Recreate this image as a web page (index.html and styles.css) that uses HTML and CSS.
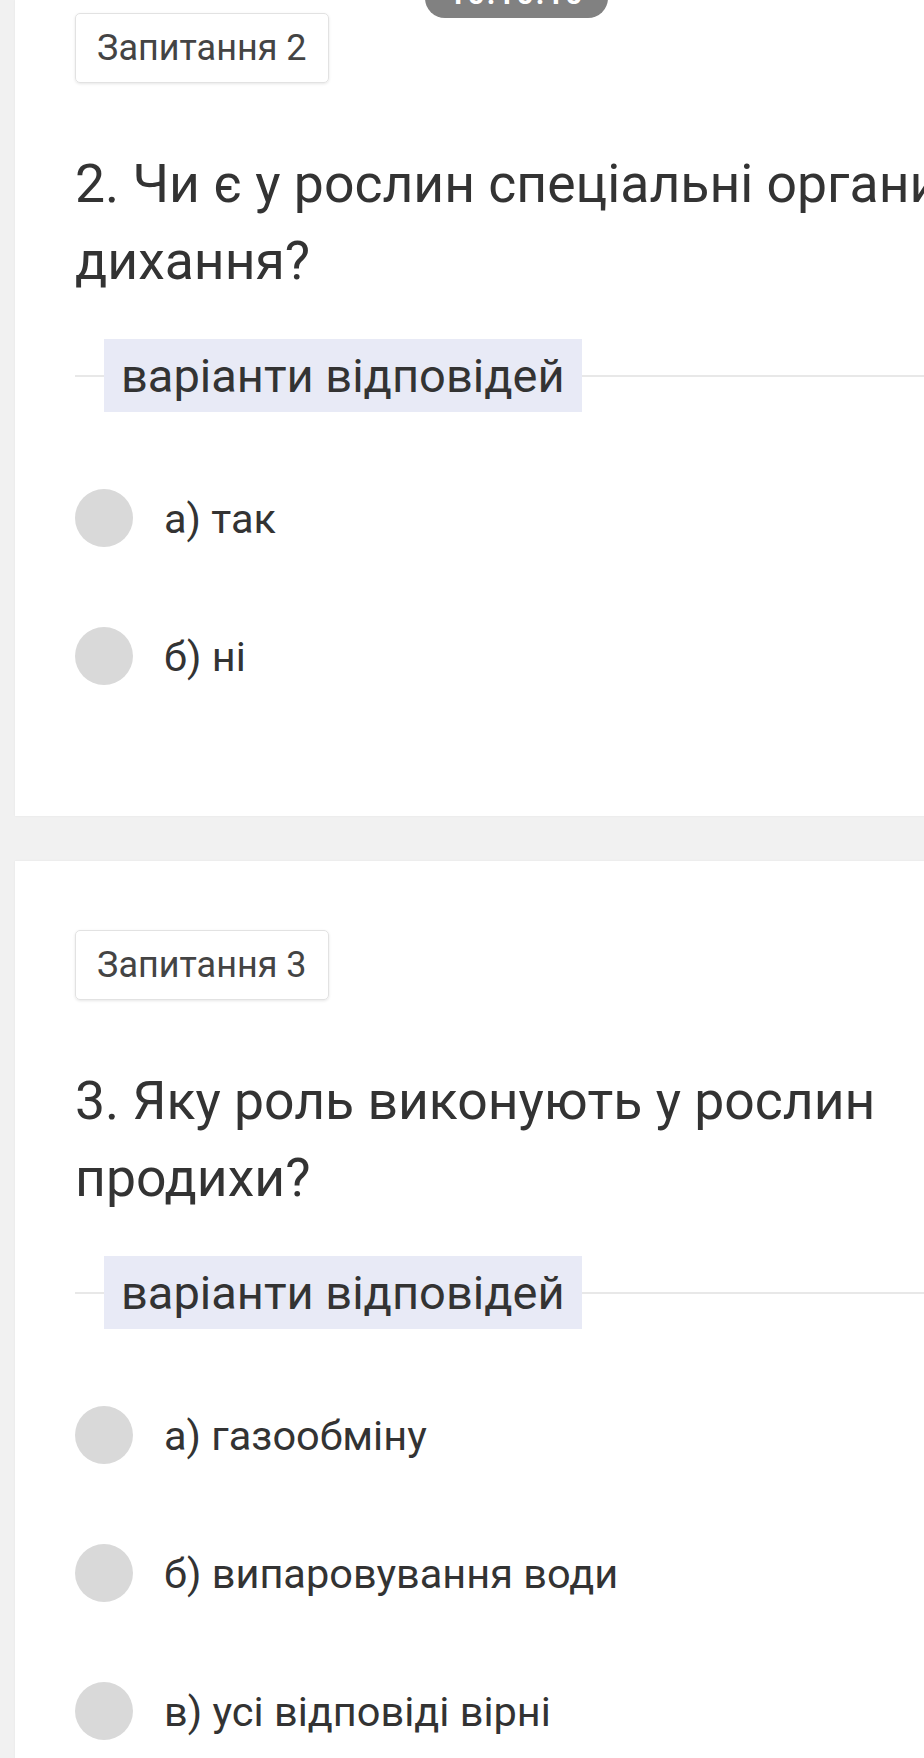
FILE: index.html
```html
<!DOCTYPE html>
<html lang="uk">
<head>
<meta charset="utf-8">
<title>Запитання</title>
<link rel="stylesheet" href="styles.css">
</head>
<body>
<div class="toast">10:10:10</div>
<main class="page">
  <section class="card card-first">
    <div class="badge">Запитання 2</div>
    <h2 class="question">2. Чи є у рослин спеціальні органи дихання?</h2>
    <div class="divider"><span class="divider-label">варіанти відповідей</span></div>
    <ul class="options">
      <li class="option"><span class="radio"></span><span class="option-text">а) так</span></li>
      <li class="option"><span class="radio"></span><span class="option-text">б) ні</span></li>
    </ul>
  </section>
  <section class="card">
    <div class="badge">Запитання 3</div>
    <h2 class="question">3. Яку роль виконують у рослин продихи?</h2>
    <div class="divider"><span class="divider-label">варіанти відповідей</span></div>
    <ul class="options">
      <li class="option"><span class="radio"></span><span class="option-text">а) газообміну</span></li>
      <li class="option"><span class="radio"></span><span class="option-text">б) випаровування води</span></li>
      <li class="option"><span class="radio"></span><span class="option-text">в) усі відповіді вірні</span></li>
    </ul>
  </section>
</main>
</body>
</html>
```
FILE: styles.css
```css
html, body {
  margin: 0;
  padding: 0;
  overflow: hidden;
}
body {
  background: #f1f1f1;
  font-family: Roboto, "Noto Sans", "Liberation Sans", sans-serif;
  color: #333333;
  width: 924px;
  height: 1758px;
  position: relative;
}
.toast {
  position: absolute;
  top: -22px;
  left: 425px;
  width: 183px;
  height: 40px;
  border-radius: 20px;
  background: #818181;
  color: #ffffff;
  font-size: 30px;
  font-weight: 700;
  line-height: 32px;
  text-align: center;
  letter-spacing: 2px;
  z-index: 5;
}
.page {
  display: flex;
  flex-direction: column;
  gap: 45px;
}
.card {
  margin-left: 15px;
  width: 1060px;
  background: #ffffff;
  padding: 69px 0 91px 60px;
  box-sizing: border-box;
  box-shadow: 0 0 2px rgba(0, 0, 0, 0.06);
}
.card-first {
  padding-top: 13px;
}
.badge {
  display: inline-block;
  height: 70px;
  box-sizing: border-box;
  padding: 0 21px;
  border: 1px solid #e2e2e2;
  border-radius: 5px;
  box-shadow: 0 1px 3px rgba(0, 0, 0, 0.10);
  font-size: 36px;
  line-height: 68px;
  color: #444444;
}
.question {
  margin: 62px 0 0;
  width: 950px;
  font-size: 53.5px;
  font-weight: 400;
  line-height: 77px;
  color: #333333;
}
.divider {
  margin-top: 40px;
  display: flex;
  align-items: center;
}
.divider::before {
  content: "";
  width: 29px;
  height: 2px;
  background: #e8e8e8;
}
.divider::after {
  content: "";
  flex: 1;
  height: 2px;
  background: #e8e8e8;
}
.divider-label {
  background: #e8eaf6;
  height: 73px;
  line-height: 73px;
  padding: 0 17px;
  font-size: 47px;
  color: #333333;
}
.options {
  list-style: none;
  margin: 37px 0 0;
  padding: 0;
}
.option {
  height: 138px;
  display: flex;
  align-items: center;
  gap: 31px;
}
.radio {
  width: 58px;
  height: 58px;
  border-radius: 50%;
  background: #d9d9d9;
  flex: none;
}
.option-text {
  font-size: 41.5px;
  color: #333333;
}
```
